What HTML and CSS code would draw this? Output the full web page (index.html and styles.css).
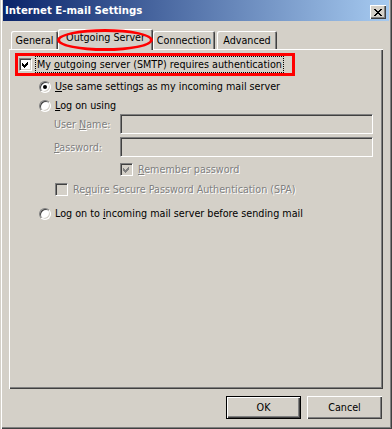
FILE: index.html
```html
<!DOCTYPE html>
<html lang="en">

<head>
    <meta charset="UTF-8">
    <title>Internet E-mail Settings</title>
    <link rel="stylesheet" href="styles.css">
</head>

<body>
    <div class="window">
        <div class="titlebar">
            <span class="title">Internet E-mail Settings</span>
            <span class="closebtn">
                <svg width="8" height="7" viewBox="0 0 8 7" shape-rendering="crispEdges">
                    <path d="M0 0h2v1h-2zM6 0h2v1h-2zM1 1h2v1h-2zM5 1h2v1h-2zM2 2h4v1h-4zM3 3h2v1h-2zM2 4h4v1h-4zM1 5h2v1h-2zM5 5h2v1h-2zM0 6h2v1h-2zM6 6h2v1h-2z" fill="#000"/>
                </svg>
            </span>
        </div>

        <div class="content">
            <div class="tabs">
                <div class="tab general">General</div>
                <div class="tab active">Outgoing Server<span class="ring"></span></div>
                <div class="tab connection">Connection</div>
                <div class="tab advanced">Advanced</div>
            </div>

            <div class="panel">
                <div class="redbox">
                    <div class="row">
                        <span class="checkbox"><svg width="7" height="7" viewBox="0 0 7 7" shape-rendering="crispEdges"><path d="M6 0v3l-4 4l-2 -2v-3l2 2z" fill="#000"/></svg></span>
                        <span class="focus">My <u>o</u>utgoing server (SMTP) requires authentication</span>
                    </div>
                </div>

                <div class="options">
                    <div class="row">
                        <span class="radio on"></span>
                        <span class="rlabel"><u>U</u>se same settings as my incoming mail server</span>
                    </div>
                    <div class="row">
                        <span class="radio"></span>
                        <span class="rlabel"><u>L</u>og on using</span>
                    </div>

                    <div class="logon">
                        <div class="field">
                            <span class="flabel disabled">User <u>N</u>ame:</span>
                            <span class="input"></span>
                        </div>
                        <div class="field">
                            <span class="flabel disabled"><u>P</u>assword:</span>
                            <span class="input"></span>
                        </div>
                        <div class="row remember">
                            <span class="checkbox off"><svg width="7" height="7" viewBox="0 0 7 7" shape-rendering="crispEdges"><path d="M6 0v3l-4 4l-2 -2v-3l2 2z" fill="#808080"/></svg></span>
                            <span class="clabel disabled"><u>R</u>emember password</span>
                        </div>
                        <div class="row spa">
                            <span class="checkbox off"></span>
                            <span class="clabel disabled">Re<u>q</u>uire Secure Password Authentication (SPA)</span>
                        </div>
                    </div>

                    <div class="row before">
                        <span class="radio"></span>
                        <span class="rlabel">Log on to <u>i</u>ncoming mail server before sending mail</span>
                    </div>
                </div>
            </div>

            <div class="buttons">
                <div class="button default">OK</div>
                <div class="button">Cancel</div>
            </div>
        </div>
    </div>
</body>

</html>
```

FILE: styles.css
```css
body {
    margin: 0;
    font-family: "DejaVu Sans Condensed", "DejaVu Sans", sans-serif;
    font-size: 10.7px;
    color: #000;
}

.window {
    width: 392px;
    height: 429px;
    box-sizing: border-box;
    padding: 0 3px 0 3px;
    background-color: #d4d0c8;
    box-shadow: inset 1px 0 #d4d0c8, inset 2px 0 #fff, inset -1px -1px #404040, inset -2px -2px #808080;
    overflow: hidden;
}

.titlebar {
    display: flex;
    justify-content: space-between;
    height: 21px;
    padding: 0 3px 0 2px;
    background: linear-gradient(to right, #0a246a, #a6caf0);
}

.title {
    color: #fff;
    font-weight: bold;
    font-size: 11.3px;
    line-height: 21px;
}

.closebtn {
    display: flex;
    justify-content: center;
    align-items: center;
    width: 16px;
    height: 14px;
    box-sizing: border-box;
    margin-top: 5px;
    background-color: #d4d0c8;
    box-shadow: inset 1px 1px #fff, inset -1px -1px #404040, inset -2px -2px #808080;
}

.content {
    padding: 0 6px;
}

.tabs {
    display: flex;
    align-items: flex-end;
    height: 20px;
    margin-top: 8px;
    padding-left: 2px;
    position: relative;
    z-index: 1;
}

.tab {
    display: flex;
    justify-content: center;
    height: 18px;
    box-sizing: border-box;
    padding-top: 3px;
    border-radius: 2px 2px 0 0;
    box-shadow: inset 1px 1px #fff, inset -1px 0 #404040, inset -2px 0 #808080;
    background-color: #d4d0c8;
}

.general {
    width: 47px;
}

.tab.active {
    position: relative;
    width: 95px;
    height: 21px;
    margin-bottom: -1px;
    padding-top: 2px;
}

.connection {
    width: 62px;
}

.advanced {
    width: 60px;
    margin-left: 2px;
}

.ring {
    position: absolute;
    left: -1px;
    top: 0;
    width: 96px;
    height: 22px;
    box-sizing: border-box;
    border: 3px solid #f00;
    border-radius: 50%;
}

.panel {
    height: 340px;
    box-sizing: border-box;
    padding: 4px 6px;
    box-shadow: inset 1px 1px #fff, inset -1px -1px #404040, inset -2px -2px #808080;
}

.row {
    display: flex;
    align-items: center;
    height: 19px;
}

.redbox {
    width: 280px;
    height: 23px;
    box-sizing: border-box;
    border: 3px solid #f00;
    padding-left: 1px;
}

.redbox .row {
    height: 17px;
}

.focus {
    margin-left: 4px;
    padding: 0 1px;
    outline: 1px dotted #000;
    line-height: 15px;
}

.checkbox {
    display: flex;
    justify-content: center;
    align-items: center;
    width: 13px;
    height: 13px;
    box-sizing: border-box;
    border: 1px solid;
    border-color: #808080 #fff #fff #808080;
    box-shadow: inset 1px 1px #404040, inset -1px -1px #d4d0c8;
    background-color: #fff;
    flex-shrink: 0;
}

.checkbox.off {
    background-color: #d4d0c8;
}

.options {
    padding-left: 24px;
    padding-top: 1px;
}

.radio {
    position: relative;
    width: 12px;
    height: 12px;
    box-sizing: border-box;
    border: 1px solid;
    border-color: #808080 #fff #fff #808080;
    border-radius: 50%;
    box-shadow: inset 1px 1px #404040, inset -1px -1px #d4d0c8;
    background-color: #fff;
    flex-shrink: 0;
}

.radio.on::after {
    content: "";
    position: absolute;
    left: 3px;
    top: 3px;
    width: 4px;
    height: 4px;
    border-radius: 50%;
    background-color: #000;
}

.rlabel {
    margin-left: 4px;
}

.clabel {
    margin-left: 5px;
}

.disabled {
    color: #808080;
    text-shadow: 1px 1px #fff;
}

.logon {
    padding-left: 15px;
}

.field {
    display: flex;
    align-items: center;
    height: 20px;
    margin-bottom: 3px;
}

.field:first-child {
    margin-top: -1px;
}

.flabel {
    width: 66px;
}

.input {
    width: 253px;
    height: 20px;
    box-sizing: border-box;
    border: 1px solid;
    border-color: #808080 #fff #fff #808080;
    box-shadow: inset 1px 1px #404040, inset -1px -1px #d4d0c8;
    background-color: #d4d0c8;
}

.remember {
    padding-left: 66px;
    margin-top: 1px;
}

.spa {
    padding-left: 1px;
    margin-top: 1px;
}

.before {
    margin-top: 5px;
}

.buttons {
    display: flex;
    justify-content: flex-end;
    gap: 6px;
    margin-top: 7px;
    padding-right: 1px;
}

.button {
    display: flex;
    justify-content: center;
    align-items: center;
    width: 75px;
    height: 23px;
    box-sizing: border-box;
    background-color: #d4d0c8;
    box-shadow: inset 1px 1px #fff, inset -1px -1px #404040, inset -2px -2px #808080;
}

.button.default {
    border: 1px solid #000;
}
```
